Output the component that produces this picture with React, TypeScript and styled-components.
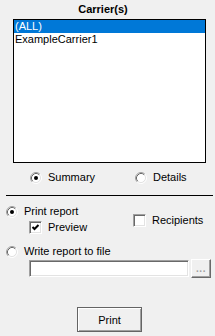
import React, { useState } from 'react';
import styled, { createGlobalStyle } from 'styled-components';

const GlobalStyle = createGlobalStyle`
  body {
    margin: 0;
    background: #f0f0f0;
  }
`;

const Panel = styled.div`
  width: 215px;
  height: 336px;
  box-sizing: border-box;
  background: #f0f0f0;
  color: #000000;
  font-family: 'Liberation Sans', Arial, sans-serif;
  font-size: 11px;
  display: flex;
  flex-direction: column;
  overflow: hidden;
`;

const Title = styled.div`
  height: 19px;
  box-sizing: border-box;
  padding: 3px 9px 0 0;
  line-height: 13px;
  font-weight: 700;
  text-align: center;
`;

const ListBox = styled.div`
  width: 193px;
  height: 144px;
  margin-left: 13px;
  box-sizing: border-box;
  border: 1px solid #000000;
  background: #ffffff;
`;

const ListItem = styled.div<{ $selected?: boolean }>`
  height: 13px;
  line-height: 13px;
  padding-left: 1px;
  white-space: nowrap;
  background: ${(p) => (p.$selected ? '#0078d7' : 'transparent')};
  color: ${(p) => (p.$selected ? '#ffffff' : '#000000')};
`;

const ModeRow = styled.div`
  display: flex;
  height: 14px;
  margin-top: 8px;
  padding-left: 30px;
`;

const ModeCell = styled.div`
  width: 105px;
  flex-shrink: 0;
`;

const Separator = styled.div`
  height: 1px;
  margin: 10px 2px 0 6px;
  background: #000000;
`;

const PrintSection = styled.div`
  display: flex;
  margin-top: 9px;
`;

const LeftColumn = styled.div`
  width: 133px;
  flex-shrink: 0;
  box-sizing: border-box;
  display: flex;
  flex-direction: column;
  padding-left: 6px;
`;

const RightColumn = styled.div`
  padding-top: 9px;
`;

const Option = styled.label<{ $indent?: number; $top?: number }>`
  display: flex;
  align-items: center;
  gap: 6px;
  height: 13px;
  line-height: 13px;
  margin-left: ${(p) => p.$indent ?? 0}px;
  margin-top: ${(p) => p.$top ?? 0}px;
  white-space: nowrap;
  cursor: default;
`;

const CheckBox = styled.span`
  width: 13px;
  height: 13px;
  box-sizing: border-box;
  border: 1px solid;
  border-color: #a0a0a0 #ffffff #ffffff #a0a0a0;
  box-shadow: inset 1px 1px 0 #696969, inset -1px -1px 0 #e3e3e3;
  background: #ffffff;
  display: flex;
  align-items: center;
  justify-content: center;
  flex-shrink: 0;
`;

const WriteRow = styled.div`
  margin-top: 11px;
  padding-left: 6px;
`;

const FileRow = styled.div`
  display: flex;
  align-items: center;
  gap: 2px;
  height: 19px;
  margin-top: 1px;
  padding-left: 29px;
`;

const FileInput = styled.div`
  width: 160px;
  height: 17px;
  box-sizing: border-box;
  border: 1px solid;
  border-color: #a0a0a0 #ffffff #ffffff #a0a0a0;
  box-shadow: inset 1px 1px 0 #696969, inset -1px -1px 0 #e3e3e3;
  background: #ffffff;
`;

const BrowseButton = styled.div`
  width: 20px;
  height: 19px;
  box-sizing: border-box;
  border: 1px solid;
  border-color: #ffffff #696969 #696969 #ffffff;
  box-shadow: inset -1px -1px 0 #a0a0a0;
  background: #f0f0f0;
  color: #a0a0a0;
  font-weight: 700;
  font-size: 10px;
  line-height: 17px;
  text-align: center;
  letter-spacing: 0.5px;
`;

const ButtonRow = styled.div`
  display: flex;
  margin-top: 29px;
  padding-left: 77px;
`;

const PushButton = styled.button`
  width: 65px;
  height: 25px;
  box-sizing: border-box;
  border: 1px solid #646464;
  box-shadow: inset 1px 1px 0 #ffffff, inset -1px -1px 0 #a0a0a0;
  background: #f0f0f0;
  font-family: inherit;
  font-size: 11px;
  color: #000000;
  padding: 0;
`;

function RadioMark({ checked }: { checked: boolean }) {
  return (
    <svg width="12" height="12" viewBox="0 0 12 12" style={{ flexShrink: 0 }}>
      <circle cx="6" cy="6" r="4.5" fill="#ffffff" />
      <path d="M2.11 9.89 A5.5 5.5 0 0 1 9.89 2.11" fill="none" stroke="#a0a0a0" strokeWidth="1" />
      <path d="M9.89 2.11 A5.5 5.5 0 0 1 2.11 9.89" fill="none" stroke="#ffffff" strokeWidth="1" />
      <path d="M2.82 9.18 A4.5 4.5 0 0 1 9.18 2.82" fill="none" stroke="#696969" strokeWidth="1" />
      <path d="M9.18 2.82 A4.5 4.5 0 0 1 2.82 9.18" fill="none" stroke="#e3e3e3" strokeWidth="1" />
      {checked && <circle cx="6" cy="6" r="2" fill="#000000" />}
    </svg>
  );
}

function CheckMark({ checked }: { checked: boolean }) {
  return (
    <CheckBox>
      {checked && (
        <svg width="9" height="9" viewBox="0 0 9 9">
          <polyline points="1.5,4 3.5,6 7.5,2" fill="none" stroke="#000000" strokeWidth="2" />
        </svg>
      )}
    </CheckBox>
  );
}

export default function App() {
  const [mode, setMode] = useState<'summary' | 'details'>('summary');
  const [output, setOutput] = useState<'print' | 'file'>('print');
  const [preview, setPreview] = useState(true);
  const [recipients, setRecipients] = useState(false);

  const carriers = ['(ALL)', 'ExampleCarrier1'];

  return (
    <Panel>
      <GlobalStyle />
      <Title>Carrier(s)</Title>
      <ListBox>
        {carriers.map((c, i) => (
          <ListItem key={c} $selected={i === 0}>
            {c}
          </ListItem>
        ))}
      </ListBox>
      <ModeRow>
        <ModeCell>
          <Option onClick={() => setMode('summary')}>
            <RadioMark checked={mode === 'summary'} />
            Summary
          </Option>
        </ModeCell>
        <ModeCell>
          <Option onClick={() => setMode('details')}>
            <RadioMark checked={mode === 'details'} />
            Details
          </Option>
        </ModeCell>
      </ModeRow>
      <Separator />
      <PrintSection>
        <LeftColumn>
          <Option onClick={() => setOutput('print')}>
            <RadioMark checked={output === 'print'} />
            Print report
          </Option>
          <Option $indent={23} $top={3} onClick={() => setPreview(!preview)}>
            <CheckMark checked={preview} />
            Preview
          </Option>
        </LeftColumn>
        <RightColumn>
          <Option onClick={() => setRecipients(!recipients)}>
            <CheckMark checked={recipients} />
            Recipients
          </Option>
        </RightColumn>
      </PrintSection>
      <WriteRow>
        <Option onClick={() => setOutput('file')}>
          <RadioMark checked={output === 'file'} />
          Write report to file
        </Option>
      </WriteRow>
      <FileRow>
        <FileInput />
        <BrowseButton>...</BrowseButton>
      </FileRow>
      <ButtonRow>
        <PushButton>Print</PushButton>
      </ButtonRow>
    </Panel>
  );
}
